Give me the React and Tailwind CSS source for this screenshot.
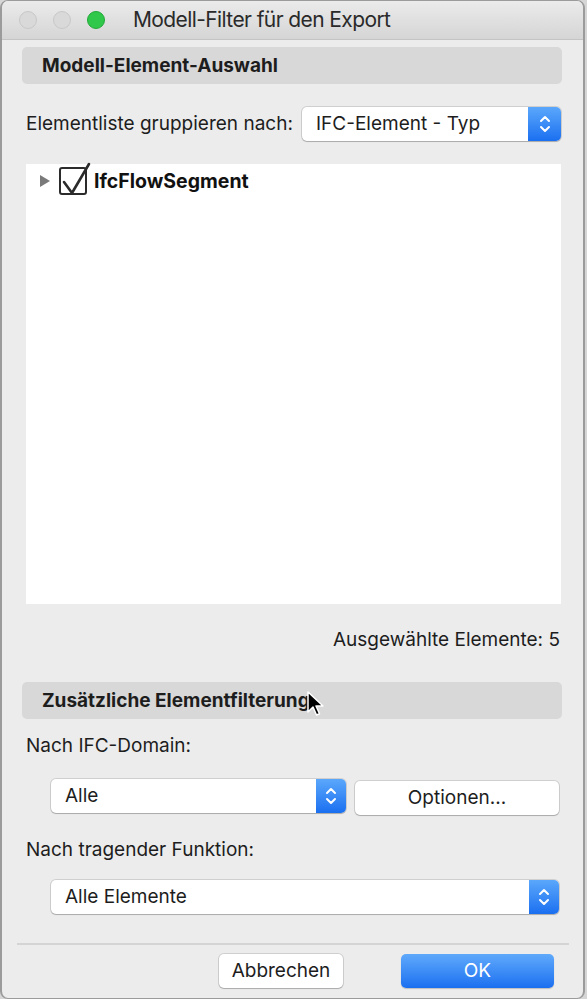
import React from "react";

const font = { fontFamily: '"Inter", "Liberation Sans", sans-serif' };

function Stepper({ className = "" }) {
  return (
    <div className={"flex items-center justify-center rounded-r-[5px] bg-gradient-to-b from-[#5aa7fb] to-[#1a6ff0] " + className}>
      <svg width="14" height="22" viewBox="0 0 14 22" fill="none" stroke="white" strokeWidth="2" strokeLinecap="round" strokeLinejoin="round">
        <path d="M3 8 L7 4 L11 8" />
        <path d="M3 14 L7 18 L11 14" />
      </svg>
    </div>
  );
}

function Popup({ label, className = "", stepperW = "w-[33px]" }) {
  return (
    <div className={"flex h-[34px] rounded-[5px] bg-white shadow-[0_0_0_1px_rgba(0,0,0,0.12),0_1px_1px_rgba(0,0,0,0.18)] " + className}>
      <div className="flex flex-1 items-center pl-[14px] text-[19px] leading-[24px] text-[#1d1d1d]">{label}</div>
      <Stepper className={stepperW} />
    </div>
  );
}

function Button({ label, className = "" }) {
  return (
    <div className={"flex h-[34px] items-center justify-center rounded-[5px] bg-white text-[19px] leading-[24px] text-[#1d1d1d] shadow-[0_0_0_1px_rgba(0,0,0,0.12),0_1px_1px_rgba(0,0,0,0.18)] " + className}>
      {label}
    </div>
  );
}

function SectionHeader({ children }) {
  return (
    <div className="ml-[20px] mr-[21px] flex h-[37px] items-center rounded-[5px] bg-[#d8d8d8] pl-[20px] text-[19px] font-bold leading-[24px] text-[#1d1d1d]">
      {children}
    </div>
  );
}

export default function App() {
  return (
    <div style={font} className="h-[999px] w-[587px] bg-[#d6d6d6]">
      <div className="flex h-[999px] w-[585px] flex-col overflow-hidden rounded-t-[8px] rounded-b-[8px] border-x-[2px] border-t border-b border-[#9b9b9b] bg-[#ececec]">
        {/* title bar */}
        <div className="relative flex h-[39px] shrink-0 items-center border-b border-[#c4c4c4] bg-gradient-to-b from-[#ebebeb] to-[#d5d5d5]">
          <div className="flex gap-[16px] pl-[17px]">
            <div className="h-[18px] w-[18px] rounded-full border border-[#c8c8c8] bg-[#d9d9d9]" />
            <div className="h-[18px] w-[18px] rounded-full border border-[#c8c8c8] bg-[#d9d9d9]" />
            <div className="h-[18px] w-[18px] rounded-full border border-[#23a838] bg-[#2fc84a]" />
          </div>
          <div className="ml-[28px] text-[21px] tracking-[-0.6px] text-[#2a2a2a]">
            Modell-Filter für den Export
          </div>
        </div>

        <div className="flex flex-1 flex-col pt-[7px]">
          <SectionHeader>Modell-Element-Auswahl</SectionHeader>

          <div className="mt-[23px] flex items-center pl-[24px] pr-[22px]">
            <span className="text-[19px] leading-[24px] text-[#1d1d1d]">Elementliste gruppieren nach:</span>
            <Popup label="IFC-Element - Typ" className="ml-auto w-[259px]" />
          </div>

          <div className="ml-[24px] mr-[22px] mt-[23px] h-[440px] shrink-0 bg-white">
            <div className="flex items-center pt-[3px] pl-[13px]">
              <svg width="12" height="14" viewBox="0 0 12 14">
                <path d="M1 1 L11 7 L1 13 Z" fill="#7a7a7a" />
              </svg>
              <div className="relative ml-[8px] h-[28px] w-[28px] rounded-[3px] border-[2px] border-[#2b2b2b] bg-white">
                <svg className="absolute -left-[2px] -top-[9px]" width="34" height="38" viewBox="0 0 34 38" fill="none" stroke="#2b2b2b" strokeWidth="2.6" strokeLinecap="round" strokeLinejoin="round">
                  <path d="M5 22 L13 33 L30 4" />
                </svg>
              </div>
              <span className="ml-[7px] text-[19.5px] font-bold leading-[24px] text-[#111]">IfcFlowSegment</span>
            </div>
          </div>

          <div className="mt-[24px] pr-[23px] text-right text-[19px] leading-[24px] text-[#1d1d1d]">Ausgewählte Elemente: 5</div>

          <div className="relative mt-[30px]">
            <SectionHeader>Zusätzliche Elementfilterung</SectionHeader>
            <svg className="absolute left-[304px] top-[8px]" width="20" height="30" viewBox="0 0 20 30">
              <path d="M2 2 L2 22 L7 17 L10.5 25 L13.5 23.7 L10 16 L17 16 Z" fill="#000" stroke="#fff" strokeWidth="1.5" strokeLinejoin="round" />
            </svg>
          </div>

          <div className="mt-[15px] pl-[24px] text-[19px] leading-[24px] text-[#1d1d1d]">Nach IFC-Domain:</div>

          <div className="mt-[21px] flex items-start pl-[49px] pr-[24px]">
            <Popup label="Alle" className="w-[295px]" stepperW="w-[30px]" />
            <Button label="Optionen..." className="ml-[9px] mt-[2px] flex-1" />
          </div>

          <div className="mt-[23px] pl-[24px] text-[19px] leading-[24px] text-[#1d1d1d]">Nach tragender Funktion:</div>

          <div className="mt-[18px] pl-[49px] pr-[24px]">
            <Popup label="Alle Elemente" stepperW="w-[30px]" />
          </div>

          <div className="ml-[15px] mr-[14px] mt-[29px] h-[2px] bg-[#d4d4d4]" />

          <div className="mt-[9px] flex pr-[29px]">
            <Button label="Abbrechen" className="ml-[217px] w-[124px]" />
            <div className="ml-auto flex h-[34px] w-[153px] items-center justify-center rounded-[5px] bg-gradient-to-b from-[#5fa9fb] to-[#1a6ff0] text-[19px] leading-[24px] text-white shadow-[0_1px_1px_rgba(0,0,0,0.2)]">
              OK
            </div>
          </div>
        </div>
      </div>
    </div>
  );
}
